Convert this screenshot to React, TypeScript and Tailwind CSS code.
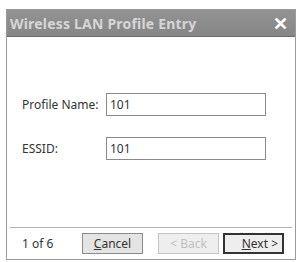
export default function App() {
  return (
    <div className="w-[298px] h-[262px] bg-white pt-[9px] pl-[6px] pr-[2px] font-['Noto_Sans',sans-serif] text-[#333]">
      <div className="h-[251px] flex flex-col border border-[#9a9a9a] bg-white">
        <div className="h-[27px] flex items-center justify-between px-[3px] bg-gradient-to-b from-[#939393] to-[#868686] border-b border-[#6e6e6e]">
          <span className="text-[14px] font-bold text-[#d6d6d6] tracking-[0.2px]">Wireless LAN Profile Entry</span>
          <span className="text-[18px] font-bold text-white leading-none mr-[4px]">✕</span>
        </div>
        <div className="flex-1 flex flex-col pt-[56px] pl-[15px]">
          <div className="flex items-center h-[23px]">
            <span className="w-[84px] text-[12px]">Profile Name:</span>
            <div className="w-[160px] h-[23px] border border-[#8a8a8a] flex items-center px-[3px] text-[12px]">101</div>
          </div>
          <div className="flex items-center h-[23px] mt-[21px]">
            <span className="w-[84px] text-[12px]">ESSID:</span>
            <div className="w-[160px] h-[23px] border border-[#8a8a8a] flex items-center px-[3px] text-[12px]">101</div>
          </div>
        </div>
        <div className="mx-[3px] border-t border-[#b0b0b0]" />
        <div className="h-[31px] flex items-center text-[12px]">
          <span className="w-[75px] pl-[15px]">1 of 6</span>
          <div className="w-[61px] h-[21px] border border-[#8a8a8a] bg-[#e4e4e4] flex items-center justify-center"><span className="underline decoration-1">C</span>ancel</div>
          <div className="ml-[15px] w-[61px] h-[21px] border border-[#c4c4c4] bg-[#eeeeee] text-[#c0c0c0] flex items-center justify-center">&lt; Back</div>
          <div className="ml-[4px] w-[61px] h-[21px] border-2 border-[#333] bg-[#eeeeee] flex items-center justify-end pr-[4px]"><span className="underline decoration-1">N</span>ext &gt;</div>
        </div>
      </div>
    </div>
  );
}
